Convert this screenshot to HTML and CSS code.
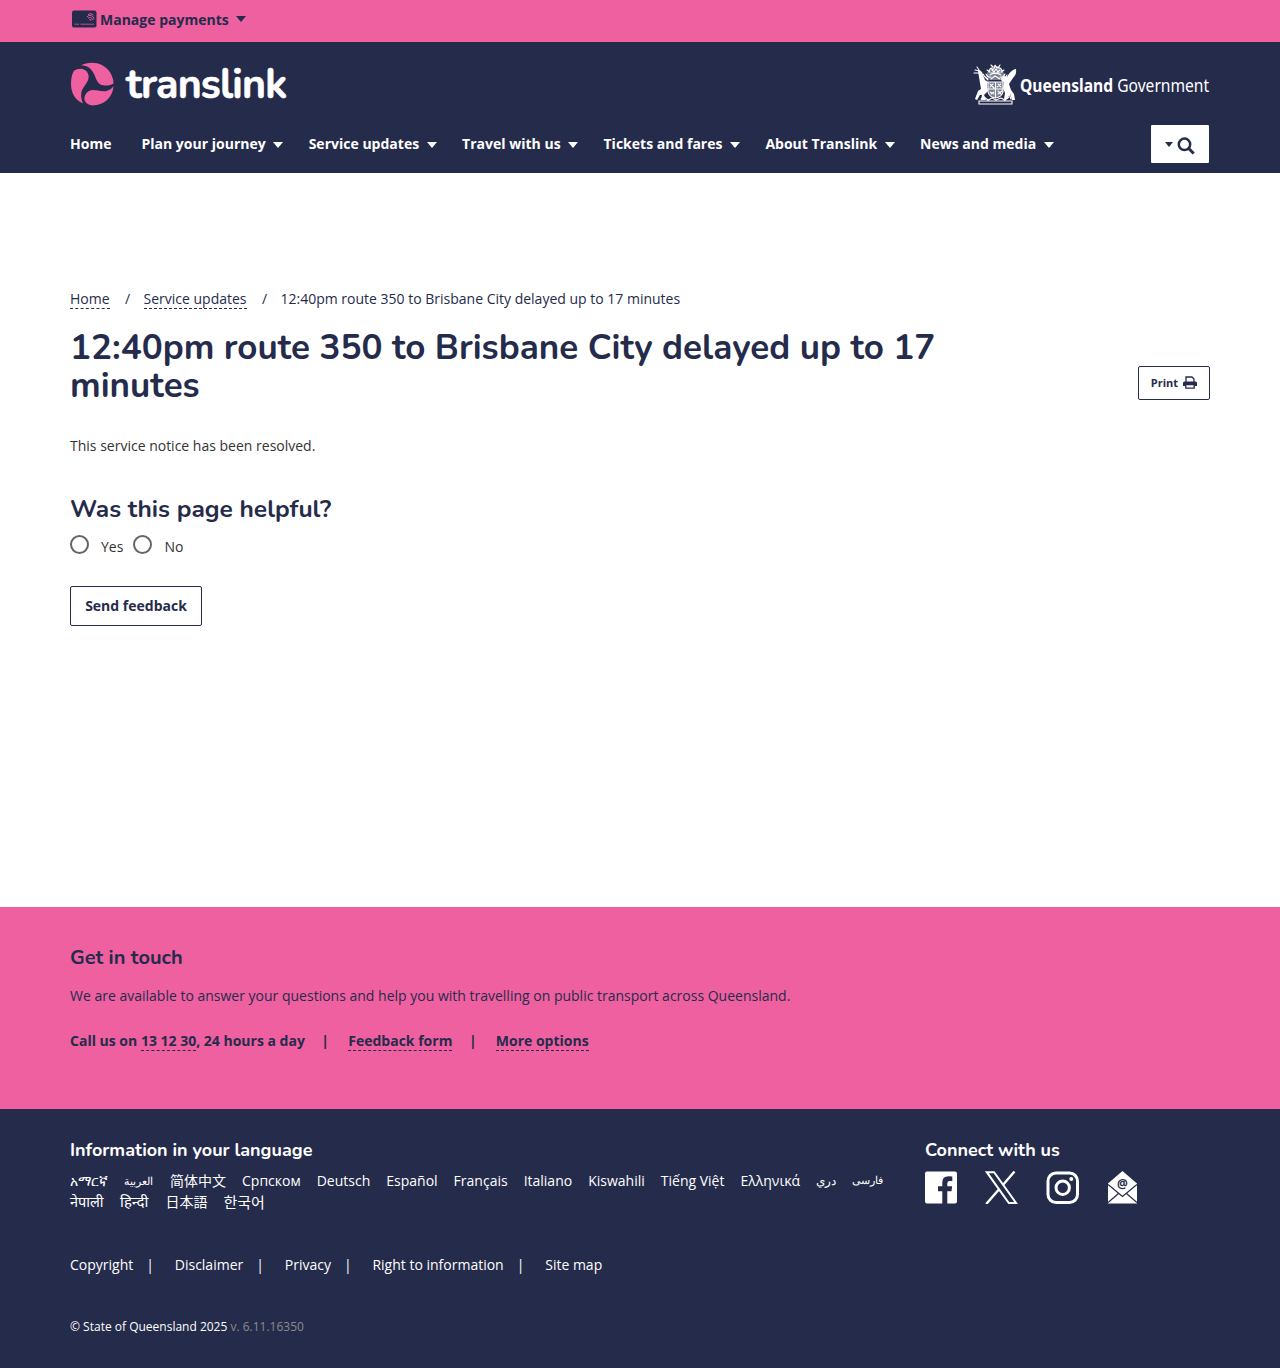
FILE: index.html
```html
<!DOCTYPE html>
<html lang="en">
<head>
<meta charset="utf-8">
<title>12:40pm route 350 to Brisbane City delayed up to 17 minutes | Translink</title>
<link rel="stylesheet" href="styles.css">
</head>
<body>
<div class="topbar">
  <div class="wrap topbar-inner">
    <svg class="card-icon" viewBox="0 0 26 18" aria-hidden="true">
      <rect x="1" y="0.5" width="24.5" height="17" rx="2" fill="#252b4b"/>
      <path d="M3.500 14.200h4.500M9.500 14.200H23" stroke="#b84e86" stroke-width="1"/>
      <g fill="none" stroke="#ef60a0" stroke-width=".9"><path d="M15.800 7a4 4 0 0 1 7.200 2.500M17 8.200a2.700 2.700 0 0 1 4.500 1.700M18.300 9.700q1.500-1 1.700 1M17 4.500q3-2 5.500.5"/></g>
    </svg>
    <span class="topbar-label">Manage payments</span>
    <i class="caret caret-dark"></i>
  </div>
</div>
<header class="header">
  <div class="wrap brand-row">
    <a class="logo">
      <svg class="logo-mark" viewBox="0 0 44 44" aria-hidden="true">
        <g fill="#ef60a0">
          <path d="M11 3.300C20-1.500 34 0 40.500 11C43 15.500 43.500 19 43.500 21.500C40 23.500 37 24 33 23.300C27 22 26.500 17 24 12C21.500 7 18 3.500 11 3.300Z"/>
          <path d="M4 8.800C9 5 16 6.500 18 11.500C20 17 17 20.500 13.500 25.500C10.500 30 10.500 35.500 13 41.500C5 38 1 31 1 22C1 16 2 12 4 8.800Z"/>
          <path d="M43.500 24C43 35 34 43.500 22.500 43.500C16 43 13 38 15 33.500C17 28.500 22 27 28 28.500C34 30 40 29.500 43.500 24Z"/>
        </g>
      </svg>
      <span class="logo-word">translink</span>
    </a>
    <a class="qg">
      <svg class="crest" viewBox="0 0 44 42" aria-hidden="true">
        <path d="M15 8l4-5h7l4 5 2 5-4 4H17l-4-4zM15 19h15v10q-1 5-7.500 6Q16 34 15 29z" fill="#fff" fill-opacity=".4"/>
        <g fill="none" stroke="#fff" stroke-width="1.100" stroke-linecap="round">
          <path d="M16 9q1-5 3-3t3-4q1 3 4 3t3 4M14 7l3 2M31 7l-3 2M18 10h9M17 12q5-3 11 0M18 2l2 2M27 2l-2 3M13 11q2 4 5 3M32 11q-2 4-5 3M15 16q-4-2-5-5M30 16q3-1 4-4M18 16l4-3 5 3M19 7l2 2 2-3 2 3 2-2M12 14l3 3M33 14l-3 3"/>
          <path d="M15 19h15v10q-1 5-7.500 6Q16 34 15 29zM15 26h15M22.500 19v15M17 21l4 4M24 24l4-3M17 29l4 2M25 31l4-3M17 24l3-3M25 21l3 3M18 31l3-2M25 28l3 3"/>
          <path d="M6 38h33v3H6zM8 36l3-2 4 3 4-2 4 2 5-2 4 2 4-3"/>
          <path d="M2 7l5 1M1 10l6 0M4 4l4 6M4 36l4-7M38 36l-3-8"/>
        </g>
        <g fill="#fff">
          <path d="M5 8q4-1 5 4l2 5 3 2-1 3 1 6-4 4 2 5H8l1-5-3 0-2 5-2-1 3-8 3-2-1-6z"/>
          <path d="M43 6q1 5-3 9l-4 6 2 6 3 4 1 6h-3l-2-6-3 5h-3l1-6-2-5 1-6q-3 0-3-4l4-2 2 1q3-6 8-8z"/>
        </g>
      </svg>
      <span class="qg-text"><b>Queensland</b> Government</span>
    </a>
  </div>
  <div class="wrap nav-row">
    <nav class="nav">
      <a>Home</a>
      <a>Plan your journey<i class="caret"></i></a>
      <a>Service updates<i class="caret"></i></a>
      <a>Travel with us<i class="caret"></i></a>
      <a>Tickets and fares<i class="caret"></i></a>
      <a>About Translink<i class="caret"></i></a>
      <a>News and media<i class="caret"></i></a>
    </nav>
    <button class="search" aria-label="Search">
      <i class="caret caret-dark caret-small"></i>
      <svg width="18" height="18" viewBox="0 0 18 18"><circle cx="7.500" cy="7.300" r="5.700" fill="none" stroke="#252b4b" stroke-width="2.500"/><path d="M11.700 11.500l5 5" stroke="#252b4b" stroke-width="3"/></svg>
    </button>
  </div>
</header>
<main class="wrap main">
  <nav class="crumbs"><a class="link">Home</a><span class="slash">/</span><a class="link">Service updates</a><span class="slash">/</span><span>12:40pm route 350 to Brisbane City delayed up to 17 minutes</span></nav>
  <div class="title-row">
    <h1>12:40pm route 350 to Brisbane City delayed up to 17 minutes</h1>
    <button class="print"><span>Print</span>
      <svg width="14" height="13" viewBox="0 0 14 13"><path d="M3 6V1h6l2 2v3" fill="#fff" stroke="#252b4b" stroke-width="1.300"/><path d="M0 10V7q0-1.500 1.500-1.500h11Q14 5.500 14 7v3z" fill="#252b4b"/><path d="M2.800 8.700h8.400v3.500H2.800z" fill="#fff" stroke="#252b4b" stroke-width="1.300"/></svg>
    </button>
  </div>
  <p class="notice">This service notice has been resolved.</p>
  <h2>Was this page helpful?</h2>
  <div class="radios">
    <label><i class="radio"></i><span>Yes</span></label>
    <label><i class="radio"></i><span>No</span></label>
  </div>
  <button class="send">Send feedback</button>
</main>
<section class="touch">
  <div class="wrap">
    <h3>Get in touch</h3>
    <p>We are available to answer your questions and help you with travelling on public transport across Queensland.</p>
    <div class="contacts"><span>Call us on <a class="link">13 12 30</a>, 24 hours a day</span><span class="bar">|</span><a class="link">Feedback form</a><span class="bar">|</span><a class="link">More options</a></div>
  </div>
</section>
<footer class="footer">
  <div class="wrap">
    <div class="foot-cols">
      <div class="languages">
        <h4 class="info-head">Information in your language</h4>
        <div class="langs">
          <a class="am">አማርኛ</a><a class="ar">العربية</a><a class="cjk">简体中文</a><a>Српском</a><a>Deutsch</a><a>Español</a><a>Français</a><a>Italiano</a><a>Kiswahili</a><a>Tiếng Việt</a><a>Ελληνικά</a><a class="dari">دري</a><a class="fa">فارسی</a>
        </div>
        <div class="langs">
          <a class="ne">नेपाली</a><a class="hi">हिन्दी</a><a class="ja">日本語</a><a class="ko">한국어</a>
        </div>
      </div>
      <div class="connect">
        <h4 class="conn-head">Connect with us</h4>
        <div class="social">
          <svg width="32" height="33" viewBox="0 0 32 33"><path d="M2 .500h28q2 0 2 2v28q0 2-2 2h-7.700V20.300h4.200l.6-5h-4.800v-3q0-2.300 2.400-2.300h2.600V5.600Q25.500 5.300 23.500 5.300q-6.200 0-6.200 6.400v3.600H13v5h4.300v12.200H2q-2 0-2-2v-28Q0 .500 2 .500z" fill="#fff"/></svg>
          <svg width="33" height="33" viewBox="0 0 33 33"><path d="M1.800 1.200h7.300l22 30.800h-7.300z" fill="none" stroke="#fff" stroke-width="2"/><path d="M29.500.500L17.700 14.200M14.300 18L1.200 33" stroke="#fff" stroke-width="2.400"/></svg>
          <svg width="33" height="33" viewBox="0 0 33 33"><g fill="none" stroke="#fff" stroke-width="3"><rect x="2" y="2" width="29.500" height="29.500" rx="8"/><circle cx="16.700" cy="16.700" r="6.700"/></g><circle cx="25.300" cy="8" r="2" fill="#fff"/></svg>
          <svg class="mail" width="29" height="33" viewBox="0 0 29 33"><path d="M14.500 0L29 12.500V32.500H0V12.500z" fill="#fff"/><path d="M0 13.500l14.500 12L29 13.500M0 31.500l10.500-9M29 31.500l-10.500-9" fill="none" stroke="#252b4b" stroke-width="1.300"/><text x="14.300" y="16.500" text-anchor="middle" class="at">@</text></svg>
        </div>
      </div>
    </div>
    <div class="legal"><a>Copyright</a><span>|</span><a>Disclaimer</a><span>|</span><a>Privacy</a><span>|</span><a>Right to information</a><span>|</span><a>Site map</a></div>
    <p class="copy">© State of Queensland 2025 <span>v. 6.11.16350</span></p>
  </div>
</footer>
</body>
</html>
```
FILE: styles.css
```css
* { box-sizing: border-box; }
body {
  margin: 0;
  font: 400 14px/21px "Open Sans", "Noto Sans", "Noto Sans CJK SC", sans-serif;
  color: #333;
  background: #fff;
}
h1, h2, h3, h4, p { margin: 0; }
h1, h2, h3, h4 { font-family: Nunito, Lato, "Open Sans", sans-serif; color: #252b4b; }
button { font-family: inherit; background: #fff; color: #252b4b; border: 1px solid #252b4b; border-radius: 2px; padding: 0; }
.wrap { width: 1140px; margin: 0 auto; }
.caret { display: inline-block; border: 5px solid transparent; border-top: 6px solid #fff; border-bottom: 0; }
.caret-dark { border-top-color: #252b4b; }
.caret-small { border-width: 5px 4.500px 0; }
.link { border-bottom: 1px dashed currentColor; }

.topbar { height: 42px; background: #ef60a0; color: #252b4b; }
.topbar-inner { display: flex; align-items: center; height: 38px; }
.card-icon { width: 26px; height: 18px; margin: 0 3px 0 1px; }
.topbar-label { font-weight: 700; margin: 1px 7.500px 0 0; }

.header { height: 131px; background: #252b4b; color: #fff; }
.brand-row { display: flex; justify-content: space-between; height: 83px; padding-top: 20px; }
.logo { display: flex; height: 44px; }
.logo-mark { width: 44px; height: 44px; }
.logo-word { margin-left: 12px; padding-top: 1px; font: 700 41px/44px Nunito, Lato, sans-serif; letter-spacing: -.8px; -webkit-text-stroke: .6px #fff; }
.qg { display: flex; height: 42px; margin: 1px 1px 0 0; }
.crest { width: 44px; height: 42px; margin-right: 3px; }
.qg-text { width: 189px; font: 400 18px/44px "Noto Sans", sans-serif; white-space: nowrap; transform: scaleX(.867); transform-origin: left; }
.nav-row { display: flex; justify-content: space-between; }
.nav { display: flex; padding-top: 8px; font-weight: 700; }
.nav a { display: flex; align-items: center; height: 21px; margin-right: 25.500px; white-space: nowrap; letter-spacing: .01px; }
.nav a:first-child { margin-right: 30px; }
.nav .caret { margin: 2px 0 0 7.400px; }
.search { display: flex; align-items: center; justify-content: center; gap: 4px; width: 58px; height: 38px; border: 0; border-radius: 1px; margin-right: 1px; }
.search svg { margin-top: 4px; }

.main { height: 734px; padding-top: 115px; }
.crumbs { display: flex; color: #252b4b; }
.crumbs .link { height: 21px; }
.slash { margin: 0 13.300px 0 15.500px; }
.title-row { display: flex; justify-content: space-between; margin-top: 20px; height: 76px; }
h1 { width: 900px; font-size: 35px; line-height: 38px; font-weight: 700; }
.print { display: flex; align-items: center; justify-content: center; gap: 5px; width: 72px; height: 34px; margin-top: 37px; font-size: 11px; font-weight: 700; }
.print span { margin-bottom: 2px; }
.print svg { margin-bottom: 1px; }
.notice { margin-top: 30px; }
h2 { margin-top: 36px; font-size: 24.500px; line-height: 34px; font-weight: 700; }
.radios { display: flex; gap: 10px; height: 21px; margin-top: 9px; }
.radios label { display: flex; }
.radios span { margin: 1px 0 0 12px; }
.radio { width: 19px; height: 19px; border: 2px solid #666; border-radius: 50%; }
.send { display: block; width: 132px; height: 40px; margin-top: 30px; padding-bottom: 2px; font-size: 14px; font-weight: 700; }

.touch { height: 202px; background: #ef60a0; color: #252b4b; padding-top: 37px; }
.touch h3 { font-size: 20px; line-height: 28px; font-weight: 700; }
.touch p { margin-top: 13px; }
.contacts { display: flex; margin-top: 24px; font-weight: 700; }
.contacts .link { height: 21px; }
.contacts .bar { margin: 0 19.200px 0 16.500px; }

.footer { height: 259px; background: #252b4b; color: #fff; padding-top: 29px; }
.foot-cols { display: flex; height: 116px; }
.languages { width: 855px; }
.footer h4 { color: #fff; font-size: 18px; line-height: 24px; font-weight: 700; }
.langs { display: flex; gap: 16px; height: 21px; white-space: nowrap; }
.info-head + .langs { margin-top: 8px; }
.ar { width: 30px; font-size: 11px; }
.dari { width: 20px; font-size: 12px; }
.fa { width: 31px; font-size: 10.500px; }
.ne { width: 34px; font-size: 14.500px; }
.hi { width: 29.500px; font-size: 15px; }
.ja { font-family: "Noto Sans CJK JP", sans-serif; }
.ko { font-family: "Noto Sans CJK KR", sans-serif; font-size: 15px; }
.social { display: flex; gap: 28px; margin-top: 9px; }
.mail { margin-left: 1px; }
.at { font: 700 12px "Open Sans", sans-serif; fill: #252b4b; }
.legal { display: flex; white-space: nowrap; }
.legal span { margin: 0 20.800px 0 13px; }
.copy { margin-top: 41px; font-size: 12px; }
.copy span { color: #8b8b8f; }
```
